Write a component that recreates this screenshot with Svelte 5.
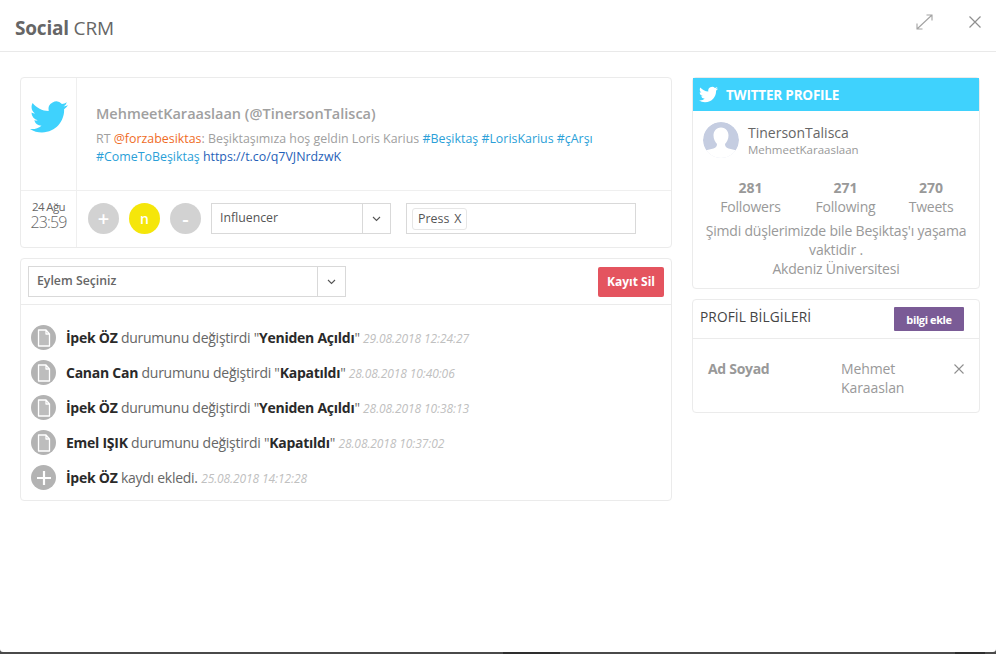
<script>
  const logs = [
    { who: 'İpek ÖZ', to: 'Yeniden Açıldı', at: '29.08.2018 12:24:27' },
    { who: 'Canan Can', to: 'Kapatıldı', at: '28.08.2018 10:40:06' },
    { who: 'İpek ÖZ', to: 'Yeniden Açıldı', at: '28.08.2018 10:38:13' },
    { who: 'Emel IŞIK', to: 'Kapatıldı', at: '28.08.2018 10:37:02' }
  ];
  const bird = 'M23.95 4.57a10 10 0 0 1-2.82.77 4.96 4.96 0 0 0 2.16-2.72c-.95.55-2 .95-3.12 1.18a4.92 4.92 0 0 0-8.38 4.48C7.69 8.1 4.07 6.13 1.64 3.16a4.82 4.82 0 0 0-.67 2.48c0 1.71.87 3.21 2.19 4.1a4.9 4.9 0 0 1-2.23-.62v.06a4.92 4.92 0 0 0 3.95 4.83 5 5 0 0 1-2.21.08 4.94 4.94 0 0 0 4.6 3.42A9.87 9.87 0 0 1 0 19.54a13.94 13.94 0 0 0 7.55 2.21c9.05 0 14-7.5 14-13.98 0-.21 0-.42-.02-.63a9.94 9.94 0 0 0 2.46-2.55z';
</script>

<div class="modal">
  <div class="panel">
    <header class="top">
      <h1><b>Social</b> CRM</h1>
      <div class="tools">
        <svg width="17" height="16" viewBox="0 0 17 16" fill="none" stroke="#a3a3a3" stroke-width="1.1"><path d="M1 15 16 1M10.500 1H16v5.500M1 9.500V15h5.500"/></svg>
        <svg width="12" height="12" viewBox="0 0 12 12" fill="none" stroke="#8f8f8f" stroke-width="1.2"><path d="M.5.5l11 11M11.500.5l-11 11"/></svg>
      </div>
    </header>

    <main class="body">
      <div class="left">
        <section class="card">
          <div class="tweet">
            <div class="birdcell">
              <svg width="38" height="38" viewBox="0 0 24 24" fill="#3fd2fd"><path d={bird}/></svg>
            </div>
            <div class="content">
              <h2>MehmeetKaraaslaan (@TinersonTalisca)</h2>
              <p>RT <span class="org">@forzabesiktas</span>: Beşiktaşımıza hoş geldin Loris Karius <span class="tag">#Beşiktaş</span> <span class="tag">#LorisKarius</span> <span class="tag">#çArşı</span> <span class="tag">#ComeToBeşiktaş</span> <span class="url">https://t.co/q7VJNrdzwK</span></p>
            </div>
          </div>
          <div class="actions">
            <div class="date"><span>24 Ağu</span><strong>23:59</strong></div>
            <div class="controls">
              <span class="dot">+</span>
              <span class="dot yellow">n</span>
              <span class="dot">-</span>
              <div class="select influencer">
                <span class="val">Influencer</span>
                <span class="arrow"><svg width="9" height="6" viewBox="0 0 9 6" fill="none" stroke="#555" stroke-width="1.1"><path d="M1 1l3.500 3.500L8 1"/></svg></span>
              </div>
              <div class="tags"><span class="chip">Press <i>X</i></span></div>
            </div>
          </div>
        </section>

        <section class="card">
          <div class="logbar">
            <div class="select action">
              <span class="val">Eylem Seçiniz</span>
              <span class="arrow"><svg width="9" height="6" viewBox="0 0 9 6" fill="none" stroke="#555" stroke-width="1.1"><path d="M1 1l3.500 3.500L8 1"/></svg></span>
            </div>
            <button class="del">Kayıt Sil</button>
          </div>
          <ul class="log">
            {#each logs as l}
              <li>
                <span class="ico"><svg width="14" height="18" viewBox="0 0 14 18" fill="rgba(255,255,255,.14)" stroke="#fff" stroke-width="1.3" stroke-linejoin="round"><path d="M1.500 1H9l3.500 4v12h-11zM9 1v4h3.500" /></svg></span>
                <span class="line"><b>{l.who}</b> durumunu değiştirdi "<b>{l.to}</b>" <em>{l.at}</em></span>
              </li>
            {/each}
            <li>
              <span class="ico"><svg width="16" height="16" viewBox="0 0 16 16" stroke="#fff" stroke-width="2.200"><path d="M8 1v14M1 8h14"/></svg></span>
              <span class="line"><b>İpek ÖZ</b> kaydı ekledi. <em>25.08.2018 14:12:28</em></span>
            </li>
          </ul>
        </section>
      </div>

      <aside class="right">
        <section class="card profile">
          <div class="tw-head">
            <svg width="19" height="19" viewBox="0 0 24 24" fill="#fff"><path d={bird}/></svg>
            <span>TWITTER PROFILE</span>
          </div>
          <div class="who">
            <span class="avatar">
              <svg width="36" height="36" viewBox="0 0 36 36"><circle cx="18" cy="18" r="18" fill="#c5cde1"/><path d="M18 5.500c-5 0-7.500 4-7.500 8 0 3.500 1.500 6.500 3.500 8.500 0 2-1 3.500-3.500 4.500L0 29v7h36v-7l-10.500-2.500C23 25.500 22 24 22 22c2-2 3.500-5 3.500-8.500 0-4-2.500-8-7.500-8z" fill="#fff"/></svg>
            </span>
            <div class="names">
              <div class="n1">TinersonTalisca</div>
              <div class="n2">MehmeetKaraaslaan</div>
            </div>
          </div>
          <div class="stats">
            <div><b>281</b><span>Followers</span></div>
            <div><b>271</b><span>Following</span></div>
            <div><b>270</b><span>Tweets</span></div>
          </div>
          <p class="bio">Şimdi düşlerimizde bile Beşiktaş'ı yaşama vaktidir .<br />Akdeniz Üniversitesi</p>
        </section>

        <section class="card info">
          <div class="info-head">
            <span>PROFİL BİLGİLERİ</span>
            <button class="add">bilgi ekle</button>
          </div>
          <div class="info-row">
            <b>Ad Soyad</b>
            <span class="value">Mehmet Karaaslan</span>
            <svg width="10" height="10" viewBox="0 0 10 10" fill="none" stroke="#8f8f8f" stroke-width="1.1"><path d="M.5.5l9 9M9.500.5l-9 9"/></svg>
          </div>
        </section>
      </aside>
    </main>
  </div>
</div>

<style>
  :global(body) {
    margin: 0;
    background: #fff;
  }
  .modal {
    width: 996px;
    height: 654px;
    padding-bottom: 2px;
    box-sizing: border-box;
    font-family: "Open Sans", sans-serif;
    color: #888;
    background: linear-gradient(90deg, #4a4a4a 0 503px, #2e2e2e 503px 560px, #4a4a4a 560px 955px, #2e2e2e 955px 985px, #4a4a4a 985px);
    overflow: hidden;
  }
  .panel {
    height: 100%;
    display: flex;
    flex-direction: column;
    background: #fff;
    border-radius: 0 0 3px 3px;
  }
  .top {
    height: 51px;
    flex: none;
    border-bottom: 1px solid #e9e9e9;
    display: flex;
    align-items: center;
    justify-content: space-between;
    padding: 0 15px 0 15px;
  }
  h1 {
    margin: 4px 0 0;
    font-size: 19px;
    font-weight: 400;
    color: #666;
    letter-spacing: -0.2px;
  }
  .tools {
    display: flex;
    align-items: center;
    gap: 36px;
    margin-top: -7px;
  }
  .body {
    flex: 1;
    display: flex;
    gap: 20px;
    padding: 25px 16px 0 20px;
    align-items: flex-start;
  }
  .left {
    width: 652px;
    display: flex;
    flex-direction: column;
    gap: 10px;
  }
  .right {
    width: 288px;
    display: flex;
    flex-direction: column;
    gap: 10px;
  }
  .card {
    background: #fff;
    border: 1px solid #ebebeb;
    border-radius: 4px;
    box-sizing: border-box;
  }
  .tweet {
    display: flex;
    height: 112px;
    border-bottom: 1px solid #efefef;
  }
  .birdcell {
    width: 56px;
    flex: none;
    border-right: 1px solid #efefef;
    display: flex;
    justify-content: center;
    padding-top: 20px;
    box-sizing: border-box;
  }
  .content {
    padding: 26px 19px 0;
    flex: 1;
  }
  h2 {
    margin: 0;
    font-size: 14.500px;
    font-weight: 600;
    color: #a0a0a0;
    line-height: 20px;
  }
  .content p {
    margin: 6px 0 0;
    font-size: 12.400px;
    line-height: 18px;
    color: #a0a0a0;
  }
  .org { color: #ef6c1f; }
  .tag { color: #2b9fd8; }
  .url { color: #1f5fb8; }
  .actions {
    display: flex;
    height: 56px;
  }
  .date {
    width: 56px;
    flex: none;
    border-right: 1px solid #efefef;
    box-sizing: border-box;
    display: flex;
    flex-direction: column;
    align-items: center;
    justify-content: center;
    color: #666;
    padding-bottom: 9px;
  }
  .date span {
    font-size: 11.500px;
    line-height: 14px;
    letter-spacing: -0.6px;
  }
  .date strong {
    font-size: 16px;
    font-weight: 300;
    line-height: 16px;
    letter-spacing: -0.9px;
  }
  .controls {
    display: flex;
    align-items: center;
    padding: 0 0 1px 11px;
  }
  .dot {
    width: 31px;
    height: 31px;
    border-radius: 50%;
    background: #d2d2d2;
    color: #fff;
    font-size: 20px;
    font-weight: 600;
    display: flex;
    align-items: center;
    justify-content: center;
    margin-right: 10px;
    flex: none;
  }
  .dot.yellow {
    background: #f5e60a;
    font-size: 14px;
  }
  .select {
    display: flex;
    height: 31px;
    border: 1px solid #d9d9d9;
    box-sizing: border-box;
    color: #555;
    font-size: 12.300px;
    background: #fff;
  }
  .val {
    flex: 1;
    display: flex;
    align-items: center;
    padding: 0 0 2px 8px;
  }
  .arrow {
    width: 27px;
    border-left: 1px solid #d9d9d9;
    display: flex;
    align-items: center;
    justify-content: center;
    flex: none;
  }
  .influencer {
    width: 180px;
    margin-right: 15px;
  }
  .tags {
    width: 230px;
    height: 31px;
    border: 1px solid #d9d9d9;
    box-sizing: border-box;
    display: flex;
    align-items: center;
    padding-left: 5px;
  }
  .chip {
    height: 22px;
    box-sizing: border-box;
    border: 1px solid #e6e6e6;
    border-radius: 3px;
    padding: 0 5px;
    font-size: 12.400px;
    color: #555;
    display: flex;
    align-items: center;
    gap: 5px;
  }
  .chip i { font-style: normal; }
  .logbar {
    height: 46px;
    box-sizing: border-box;
    display: flex;
    align-items: center;
    justify-content: space-between;
    padding: 0 7px;
    border-bottom: 1px solid #ebebeb;
  }
  .action {
    width: 318px;
    font-weight: 600;
    color: #666;
  }
  .del {
    width: 66px;
    height: 30px;
    background: #e4545f;
    border: 0;
    border-radius: 2px;
    color: #fff;
    font: 700 12px "Open Sans", sans-serif;
    padding: 0;
  }
  .log {
    list-style: none;
    margin: 0;
    padding: 20px 10px 10px;
    display: flex;
    flex-direction: column;
    gap: 10px;
  }
  .log li {
    display: flex;
    align-items: center;
    height: 25px;
    gap: 10px;
    font-size: 14px;
    color: #666;
    letter-spacing: -0.26px;
  }
  .log b {
    color: #2a2a2a;
    font-weight: 700;
  }
  .log em {
    color: #c0c0c0;
    font-size: 12px;
    letter-spacing: -0.1px;
  }
  .ico {
    width: 25px;
    height: 25px;
    border-radius: 50%;
    background: #b3b3b3;
    display: flex;
    align-items: center;
    justify-content: center;
    flex: none;
  }
  .profile {
    height: 212px;
    text-align: center;
  }
  .tw-head {
    height: 33px;
    background: #3fd2fd;
    color: #fff;
    display: flex;
    align-items: center;
    gap: 8px;
    padding-left: 6px;
    font-size: 13.500px;
    font-weight: 700;
    text-align: left;
  }
  .tw-head span {
    letter-spacing: -0.2px;
  }
  .who {
    display: flex;
    align-items: center;
    padding: 11px 10px 0;
    gap: 9px;
    text-align: left;
  }
  .avatar {
    width: 36px;
    height: 36px;
    flex: none;
    overflow: hidden;
    border-radius: 50%;
    display: block;
  }
  .n1 {
    font-size: 14px;
    color: #666;
    line-height: 19px;
  }
  .n2 {
    font-size: 11.500px;
    color: #999;
    line-height: 15px;
  }
  .stats {
    height: 38px;
    margin-top: 20px;
    display: grid;
    grid-template-columns: 95px 95px 76px;
    padding-left: 10px;
    font-size: 14px;
    line-height: 19px;
  }
  .stats div {
    display: flex;
    flex-direction: column;
    align-items: center;
  }
  .stats b {
    font-weight: 700;
    color: #999;
  }
  .stats span {
    letter-spacing: -0.2px;
    color: #999;
  }
  .bio {
    margin: 5px 0 0;
    font-size: 14px;
    line-height: 19px;
    color: #999;
    padding: 0 8px;
    letter-spacing: -0.2px;
  }
  .info-head {
    height: 38px;
    display: flex;
    align-items: center;
    justify-content: space-between;
    padding: 0 15px 0 7px;
    border-bottom: 1px solid #ebebeb;
    font-size: 13.700px;
    color: #444;
  }
  .info-head span {
    margin-top: -6px;
    letter-spacing: 0.1px;
  }
  .add {
    width: 70px;
    height: 24px;
    background: #7a5b96;
    border: 0;
    border-radius: 1px;
    color: #fff;
    font: 700 11px "Open Sans", sans-serif;
    padding: 0;
    letter-spacing: -0.4px;
  }
  .info-row {
    display: flex;
    align-items: flex-start;
    height: 73px;
    box-sizing: border-box;
    padding: 20px 15px 0;
    font-size: 14px;
    line-height: 19px;
    color: #999;
  }
  .info-row b {
    width: 133px;
    flex: none;
    letter-spacing: -0.3px;
  }
  .value {
    width: 100px;
    flex: none;
    letter-spacing: -0.1px;
  }
  .info-row svg {
    margin: 5px 0 0 13px;
  }
</style>
